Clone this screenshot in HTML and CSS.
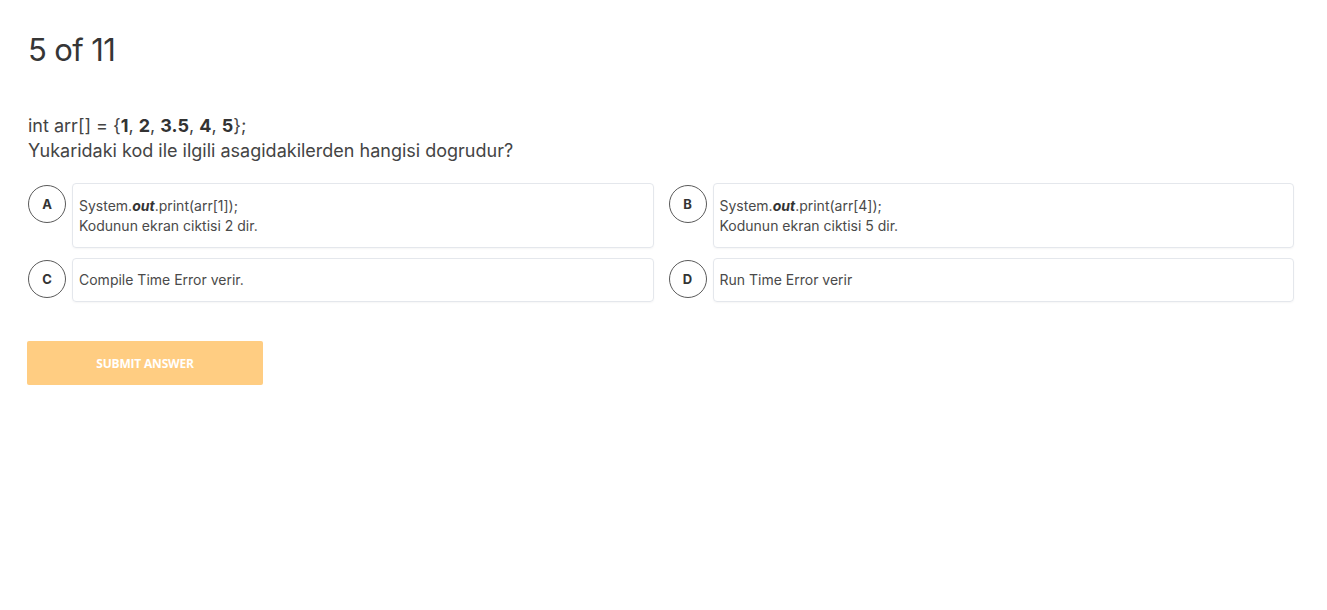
FILE: index.html
```html
<!DOCTYPE html>
<html lang="tr">
<head>
<meta charset="utf-8">
<title>Quiz</title>
<link rel="stylesheet" href="styles.css">
</head>
<body>
<main class="quiz">
  <h1 class="counter">5 of 11</h1>
  <div class="question">
    <div>int arr[] = {<b>1</b>, <b>2</b>, <b>3.5</b>, <b>4</b>, <b>5</b>};</div>
    <div>Yukaridaki kod ile ilgili asagidakilerden hangisi dogrudur?</div>
  </div>
  <div class="options">
    <div class="option">
      <span class="letter">A</span>
      <div class="box">
        <div>System.<b><i>out</i></b>.print(arr[1]);</div>
        <div>Kodunun ekran ciktisi 2 dir.</div>
      </div>
    </div>
    <div class="option">
      <span class="letter">B</span>
      <div class="box">
        <div>System.<b><i>out</i></b>.print(arr[4]);</div>
        <div>Kodunun ekran ciktisi 5 dir.</div>
      </div>
    </div>
    <div class="option">
      <span class="letter">C</span>
      <div class="box">
        <div>Compile Time Error verir.</div>
      </div>
    </div>
    <div class="option">
      <span class="letter">D</span>
      <div class="box">
        <div>Run Time Error verir</div>
      </div>
    </div>
  </div>
  <button class="submit" type="button">SUBMIT ANSWER</button>
</main>
</body>
</html>
```

FILE: styles.css
```css
html, body {
  margin: 0;
  padding: 0;
  background: #ffffff;
}
body {
  font-family: Inter, "Noto Sans", sans-serif;
  color: #444444;
}
.quiz {
  padding: 30px 33px 0 28px;
}
.counter {
  margin: 0;
  font-weight: 400;
  font-size: 31px;
  line-height: 40px;
  letter-spacing: -0.6px;
  color: #363636;
}
.question {
  margin-top: 43px;
  font-size: 18px;
  line-height: 25px;
  color: #444444;
}
.question b {
  font-weight: 700;
  color: #333333;
}
.options {
  margin-top: 20px;
  display: grid;
  grid-template-columns: 1fr 1fr;
  column-gap: 15px;
  row-gap: 10px;
}
.option {
  display: flex;
  align-items: flex-start;
  gap: 6px;
}
.letter {
  flex: none;
  width: 36px;
  height: 36px;
  margin-top: 2px;
  border: 1px solid #5a5a5a;
  border-radius: 50%;
  display: flex;
  align-items: center;
  justify-content: center;
  font-size: 13px;
  font-weight: 700;
  color: #333333;
}
.box {
  flex: 1;
  min-height: 20px;
  padding: 12px 6px;
  border: 1px solid #e4e7ec;
  border-radius: 4px;
  box-shadow: 0 1px 2px rgba(0, 0, 0, 0.04);
  font-size: 14px;
  line-height: 19.5px;
  color: #4a4a4a;
}
.option:nth-child(n+3) .box {
  padding: 11px 6px;
  line-height: 20px;
}
.box b i {
  font-weight: 700;
  color: #333333;
}
.submit {
  display: block;
  margin-top: 39px;
  margin-left: -1px;
  width: 236px;
  height: 44px;
  border: none;
  border-radius: 2px;
  background: #ffcd82;
  color: #ffffff;
  font-family: "Open Sans", sans-serif;
  font-weight: 700;
  font-size: 12px;
  letter-spacing: -0.2px;
}
```
